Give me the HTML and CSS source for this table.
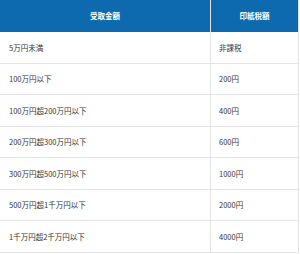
FILE: index.html
```html
<!DOCTYPE html>
<html lang="ja">
<head>
<meta charset="utf-8">
<link rel="stylesheet" href="styles.css">
</head>
<body>
<table class="tax">
  <thead>
    <tr><th class="c-amount">受取金額</th><th class="c-tax">印紙税額</th></tr>
  </thead>
  <tbody>
    <tr><td>5万円未満</td><td>非課税</td></tr>
    <tr><td>100万円以下</td><td>200円</td></tr>
    <tr><td>100万円超200万円以下</td><td>400円</td></tr>
    <tr><td>200万円超300万円以下</td><td>600円</td></tr>
    <tr><td>300万円超500万円以下</td><td>1000円</td></tr>
    <tr><td>500万円超1千万円以下</td><td>2000円</td></tr>
    <tr><td>1千万円超2千万円以下</td><td>4000円</td></tr>
  </tbody>
</table>
</body>
</html>
```
FILE: styles.css
```css
html, body {
  margin: 0;
  padding: 0;
  background: #fff;
}
body {
  font-family: "Noto Sans CJK JP", "Noto Sans", sans-serif;
  color: #333;
}
.tax {
  width: 299px;
  border-collapse: collapse;
  table-layout: fixed;
  font-size: 7.5px;
  line-height: 1;
}
.tax th {
  background: #0e6aae;
  color: #fff;
  font-weight: bold;
  height: 32px;
  padding: 0;
  text-align: center;
  border-right: 1px solid #e4e4e4;
}
.tax .c-amount {
  width: 210px;
}
.tax td {
  height: 30.5px;
  padding: 0 0 0 9px;
  text-align: left;
  border-bottom: 1px solid #e4e4e4;
  border-right: 1px solid #e4e4e4;
}
.tax td + td {
  padding-left: 8px;
}
```
